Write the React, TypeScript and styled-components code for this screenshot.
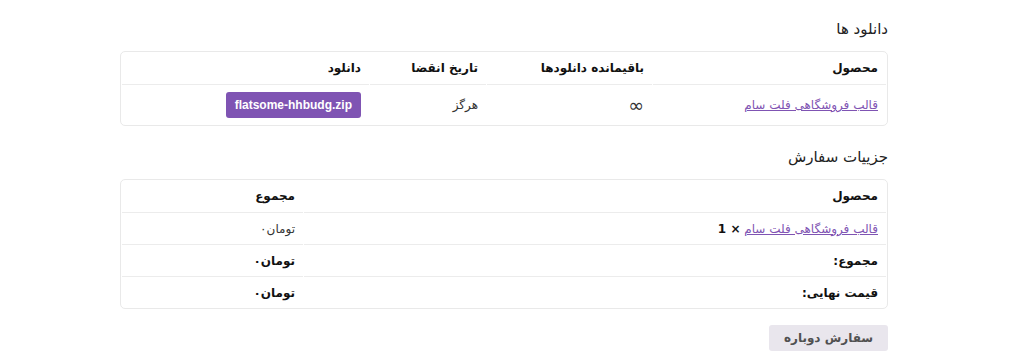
import React from "react"
import styled, { createGlobalStyle } from "styled-components"

const GlobalStyle = createGlobalStyle`
  body {
    margin: 0;
    background: #fff;
    font-family: "DejaVu Sans", "Noto Sans", sans-serif;
    color: #111;
  }
`

const Page = styled.div`
  direction: rtl;
  width: 768px;
  margin-left: 120px;
  padding-top: 18px;
`

const Section = styled.section<{ $gap: number }>`
  margin-bottom: ${p => p.$gap}px;
`

const Heading = styled.h2`
  margin: 0 0 11px 0;
  font-size: 15px;
  font-weight: normal;
  line-height: 22px;
  color: #222;
`

const Card = styled.div`
  border: 1px solid #e9e9e9;
  border-radius: 5px;
  overflow: hidden;
`

const Table = styled.table`
  width: 100%;
  border-collapse: separate;
  border-spacing: 1px 0;
  font-size: 12px;
  table-layout: fixed;
`

const Th = styled.th<{ $w?: number }>`
  box-sizing: border-box;
  width: ${p => (p.$w ? `${p.$w}px` : "auto")};
  text-align: right;
  font-weight: bold;
  padding: 0 8px;
  height: 33px;
  border-bottom: 1px solid #ececec;
  color: #111;
`

const Td = styled.td<{ $bold?: boolean; $tall?: boolean }>`
  box-sizing: border-box;
  text-align: right;
  padding: 0 8px;
  height: ${p => (p.$tall ? "41px" : "32px")};
  font-weight: ${p => (p.$bold ? "bold" : "normal")};
  color: ${p => (p.$bold ? "#111" : "#333")};
  border-bottom: 1px solid #ececec;

  tr:last-child > & {
    border-bottom: none;
    height: ${p => (p.$tall ? "40px" : "31px")};
  }
`

const ProductLink = styled.a`
  color: #7f54b3;
  text-decoration: underline;
`

const Qty = styled.strong`
  color: #111;
`

const FileButton = styled.a`
  display: inline-block;
  background: #7f54b3;
  color: #fff;
  font-family: "Liberation Sans", Arial, sans-serif;
  font-weight: bold;
  font-size: 12px;
  line-height: 26px;
  padding: 0 9px;
  border-radius: 3px;
  text-decoration: none;
  direction: ltr;
`

const AgainButton = styled.button`
  background: #e9e6ed;
  color: #515151;
  border: none;
  border-radius: 3px;
  font-family: "DejaVu Sans", sans-serif;
  font-weight: bold;
  font-size: 12px;
  height: 26px;
  padding: 0 14px;
  width: 119px;
`

const Infinity = styled.span`
  font-size: 19px;
  line-height: 1;
`

const orderRows = [
  { label: "مجموع:", value: "تومان۰" },
  { label: "قیمت نهایی:", value: "تومان۰" },
]

export default function App() {
  return (
    <>
      <GlobalStyle />
      <Page>
        <Section $gap={20}>
          <Heading>دانلود ها</Heading>
          <Card>
            <Table>
              <thead>
                <tr>
                  <Th $w={233}>محصول</Th>
                  <Th $w={165}>باقیمانده دانلودها</Th>
                  <Th $w={116}>تاریخ انقضا</Th>
                  <Th>دانلود</Th>
                </tr>
              </thead>
              <tbody>
                <tr>
                  <Td $tall>
                    <ProductLink href="#">قالب فروشگاهی فلت سام</ProductLink>
                  </Td>
                  <Td $tall>
                    <Infinity>∞</Infinity>
                  </Td>
                  <Td $tall>هرگز</Td>
                  <Td $tall>
                    <FileButton href="#">flatsome-hhbudg.zip</FileButton>
                  </Td>
                </tr>
              </tbody>
            </Table>
          </Card>
        </Section>
        <Section $gap={16}>
          <Heading>جزییات سفارش</Heading>
          <Card>
            <Table>
              <thead>
                <tr>
                  <Th $w={582}>محصول</Th>
                  <Th>مجموع</Th>
                </tr>
              </thead>
              <tbody>
                <tr>
                  <Td>
                    <ProductLink href="#">قالب فروشگاهی فلت سام</ProductLink>{" "}
                    <Qty>× 1</Qty>
                  </Td>
                  <Td>تومان۰</Td>
                </tr>
                {orderRows.map(r => (
                  <tr key={r.label}>
                    <Td $bold>{r.label}</Td>
                    <Td $bold>{r.value}</Td>
                  </tr>
                ))}
              </tbody>
            </Table>
          </Card>
        </Section>
        <AgainButton>سفارش دوباره</AgainButton>
      </Page>
    </>
  )
}
